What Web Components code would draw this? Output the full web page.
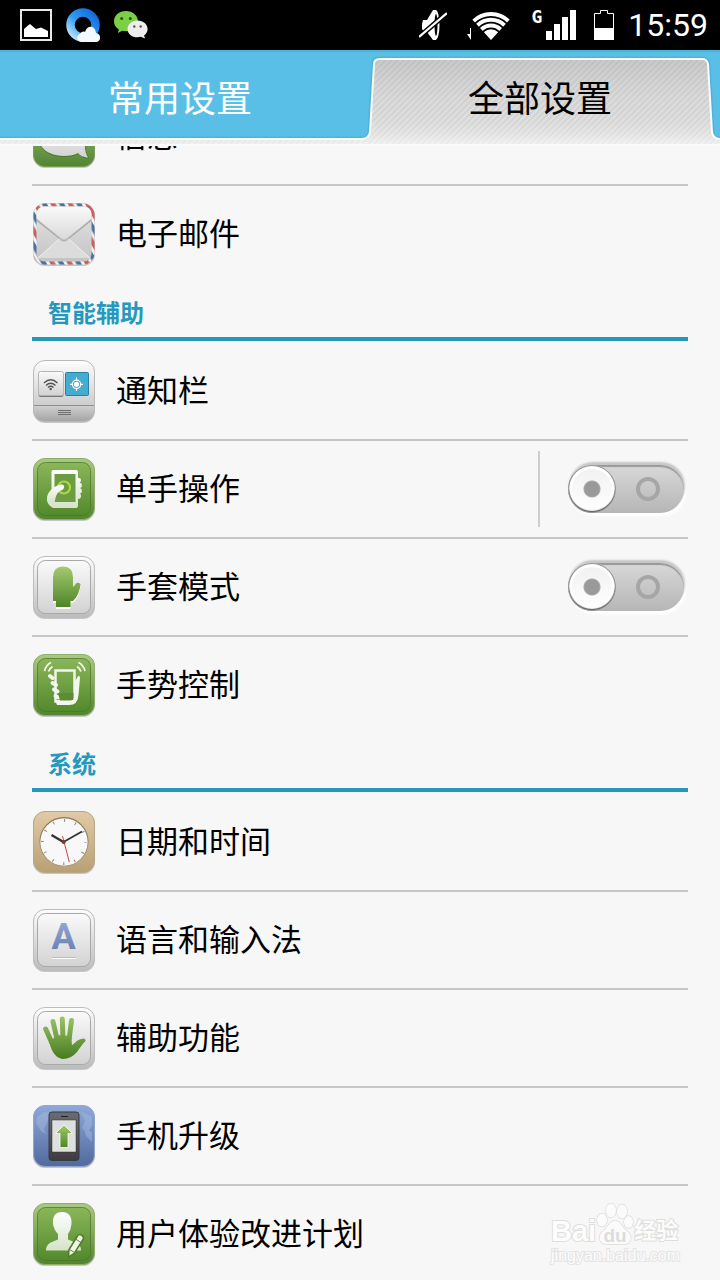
<!DOCTYPE html>
<html lang="zh-CN">
<head>
<meta charset="utf-8">
<meta name="viewport" content="width=device-width, initial-scale=1">
<title>全部设置</title>
<style>
  body {
    margin: 0;
    background: #f7f7f7;
    font-family: Roboto, "Noto Sans CJK SC", sans-serif;
    color: #000;
  }
</style>
</head>
<body>
<settings-app>
  <status-bar slot="status" time="15:59"></status-bar>
  <settings-tabs slot="tabs">
    <span slot="common">常用设置</span>
    <span slot="all">全部设置</span>
  </settings-tabs>

  <settings-row icon="message">信息</settings-row>
  <settings-row icon="mail" last>电子邮件</settings-row>

  <section-title>智能辅助</section-title>
  <settings-row icon="panel">通知栏</settings-row>
  <settings-row icon="onehand">单手操作<toggle-switch slot="end" label="单手操作" divided></toggle-switch></settings-row>
  <settings-row icon="glove">手套模式<toggle-switch slot="end" label="手套模式"></toggle-switch></settings-row>
  <settings-row icon="gesture" last>手势控制</settings-row>

  <section-title>系统</section-title>
  <settings-row icon="clock">日期和时间</settings-row>
  <settings-row icon="language">语言和输入法</settings-row>
  <settings-row icon="hand">辅助功能</settings-row>
  <settings-row icon="upgrade">手机升级</settings-row>
  <settings-row icon="user" last>用户体验改进计划</settings-row>

  <page-watermark slot="overlay"></page-watermark>
</settings-app>

<script>
// Status bar
const statusTemplate = document.createElement("template");
statusTemplate.innerHTML = `
<style>
:host {
  display: flex;
  justify-content: space-between;
  align-items: center;
  height: 50px;
  padding: 0 12px 0 20px;
  background: #000;
  color: #fff;
}
.group {
  display: flex;
  align-items: center;
  gap: 14px;
}
.radio {
  display: flex;
  align-items: center;
  gap: 20px;
  padding-right: 4px;
}
.network {
  display: flex;
  align-items: flex-start;
  gap: 4px;
}
.network span {
  font: bold 18px/14px "DejaVu Sans Mono", monospace;
}
.time {
  font-size: 32px;
  line-height: 50px;
}
svg { display: block; }
</style>
<div class="group">
  <svg width="32" height="32" viewBox="0 0 32 32">
    <rect x="1" y="1" width="30" height="30" fill="none" stroke="#e9e9e9" stroke-width="2"/>
    <path d="M4 28V20L8 16.500 10 15 14 18.500 16 20 21 18.500 28 22V28Z" fill="#fff"/>
  </svg>
  <svg width="34" height="34" viewBox="0 0 34 34">
    <defs>
      <linearGradient id="ring" x1="0" y1="1" x2="1" y2="0">
        <stop offset="0" stop-color="#c4e8ff"/><stop offset=".45" stop-color="#2f9cf0"/><stop offset="1" stop-color="#1167dc"/>
      </linearGradient>
    </defs>
    <circle cx="17" cy="17" r="12.500" fill="none" stroke="url(#ring)" stroke-width="8.500"/>
    <path d="M15 34C10 33 10 27 14 26 15 24 17 23 19 24 21 17 29 17 30 25 36 26 35 34 30 34Z" fill="#f4f9ff"/>
  </svg>
  <svg width="34" height="28" viewBox="0 0 34 28">
    <path d="M12 0C5 0 0 4.500 0 10.300c0 3.400 1.800 6.300 4.800 8.200L4 22l4.200-2.200c1.200.3 2.500.5 3.800.5 6.600 0 12-4.500 12-10S18.600 0 12 0Z" fill="#7bd044"/>
    <circle cx="7.700" cy="7.500" r="1.500" fill="#24570c"/><circle cx="16.300" cy="7.500" r="1.500" fill="#24570c"/>
    <path d="M23.500 9.500c-5.700 0-10 3.800-10 8.400s4.300 8.300 10 8.300c1.200 0 2.300-.2 3.300-.5L31 27.500l-.9-3.200c2.200-1.500 3.500-3.800 3.500-6.400 0-4.600-4.300-8.400-10.100-8.400Z" fill="#eee"/>
    <circle cx="20.300" cy="15.500" r="1.200" fill="#555"/><circle cx="26.700" cy="15.500" r="1.200" fill="#555"/>
  </svg>
</div>
<div class="group">
  <div class="radio">
    <svg width="28" height="30" viewBox="0 0 28 30">
      <path d="M4 10H8L14 0H17V30H14L8 22H5L3 19V14Z" fill="#fff"/>
      <ellipse cx="16.500" cy="15" rx="4" ry="15" fill="#fff"/>
      <ellipse cx="17" cy="15" rx="1.500" ry="11" fill="#000"/>
      <path d="M0 27L28 3" stroke="#000" stroke-width="5"/>
      <path d="M0 27L28 3" stroke="#fff" stroke-width="2.300"/>
    </svg>
    <svg width="44" height="30" viewBox="0 0 44 30">
      <defs><clipPath id="fan"><path d="M24 30L3 7V0H45V7Z"/></clipPath></defs>
      <g clip-path="url(#fan)" fill="none" stroke="#fff" stroke-width="4">
        <circle cx="24" cy="29" r="25"/>
        <circle cx="24" cy="29" r="19.300"/>
        <circle cx="24" cy="29" r="13.600"/>
        <circle cx="24" cy="29" r="9.800" fill="#fff" stroke="none"/>
      </g>
      <path d="M4 18V30L0 24H3V18Z" fill="#fff"/>
    </svg>
    <div class="network">
      <span>G</span>
      <svg width="30" height="30" viewBox="0 0 30 30" fill="#fff">
        <path d="M0 21H6V30H0ZM8 14H14V30H8ZM16 7H22V30H16ZM24 0H30V30H24Z"/>
      </svg>
    </div>
  </div>
  <svg width="20" height="30" viewBox="0 0 20 30">
    <path d="M.5 29.500V3.500H6.500V.5H13.500V3.500H19.500V29.500Z" fill="none" stroke="#fff"/>
    <path d="M0 18H20V30H0Z" fill="#fff"/>
  </svg>
  <span class="time"></span>
</div>
`;

class StatusBar extends HTMLElement {
  constructor() {
    super();
    this.attachShadow({ mode: "open" });
    this.shadowRoot.appendChild(statusTemplate.content.cloneNode(true));
  }

  connectedCallback() {
    this.shadowRoot.querySelector(".time").textContent = this.getAttribute("time");
  }
}

// Tabs: the selected one is a raised, brushed trapezoid
const tabsTemplate = document.createElement("template");
tabsTemplate.innerHTML = `
<style>
:host {
  display: block;
  position: relative;
  background: #5abfe6;
}
.shape {
  position: absolute;
  width: 100%;
  height: 100%;
}
.tabs {
  position: relative;
  display: flex;
}
button {
  flex: 1;
  height: 96px;
  padding: 0 0 4px;
  border: 0;
  background: none;
  font: inherit;
  font-size: 36px;
  color: #fff;
}
button[aria-selected="true"] { color: #000; }
</style>
<svg class="shape" viewBox="0 0 720 96" preserveAspectRatio="none">
  <defs>
    <pattern id="brush" width="6" height="6" patternUnits="userSpaceOnUse">
      <rect width="6" height="6" fill="#e2e2e2"/>
      <path d="M-1 1L1 -1M-1 7L7 -1M5 7L7 5" stroke="#d3d3d3" stroke-width="2"/>
    </pattern>
    <linearGradient id="shade" x1="0" y1="0" x2="0" y2="1">
      <stop offset="0" stop-color="#999" stop-opacity=".35"/>
      <stop offset=".6" stop-color="#ccc" stop-opacity=".15"/>
      <stop offset="1" stop-color="#fff" stop-opacity=".6"/>
    </linearGradient>
    <linearGradient id="top" x1="0" y1="0" x2="0" y2="1">
      <stop offset="0" stop-color="#3f9cc2" stop-opacity=".5"/><stop offset="1" stop-color="#3f9cc2" stop-opacity="0"/>
    </linearGradient>
  </defs>
  <rect width="720" height="3" fill="url(#top)"/>
  <path d="M-4 89H362Q369 89 370 82L374 14Q374 9 380 9H702Q707 9 708 14L712 82Q713 89 720 89H724V94H-4Z" fill="none" stroke="#3f9cc2" stroke-opacity=".35" stroke-width="5"/>
  <path d="M-4 89H362Q369 89 370 82L374 14Q374 9 380 9H702Q707 9 708 14L712 82Q713 89 720 89H724V95H-4Z" fill="url(#brush)"/>
  <path d="M-4 89H362Q369 89 370 82L374 14Q374 9 380 9H702Q707 9 708 14L712 82Q713 89 720 89H724V95H-4Z" fill="url(#shade)" stroke="#f8fcfd" stroke-width="2"/>
</svg>
<div class="tabs" role="tablist">
  <button role="tab" aria-selected="false"><slot name="common"></slot></button>
  <button role="tab" aria-selected="true"><slot name="all"></slot></button>
</div>
`;

class SettingsTabs extends HTMLElement {
  constructor() {
    super();
    this.attachShadow({ mode: "open" });
    this.shadowRoot.appendChild(tabsTemplate.content.cloneNode(true));
  }
}

// App icons, 64x64
const tile = (fill, edge) =>
  `<rect x="1" y="2" width="62" height="62" rx="12" fill="#000" opacity=".2"/>
   <rect x="1.500" y="1.500" width="61" height="61" rx="11.500" fill="url(#${fill})" stroke="${edge}"/>`;

const greenTile = tile("green", "#8fae6a") +
  `<rect x="5.500" y="5.500" width="53" height="53" rx="8" fill="url(#greenIn)" stroke="#477524" stroke-opacity=".7"/>`;

const greyTile = tile("grey", "#bdbdbd") +
  `<rect x="5.500" y="5.500" width="53" height="53" rx="8" fill="url(#greyIn)" stroke="#a8a8a8"/>`;

const icons = {
  message: tile("green", "#7a9c56") +
    `<path d="M32 14C18 14 7 23 7 35 7 46 18 53 32 53 38 53 43 52 46 50 49 53 54 55 57 54.500 55 51 54 48 54 44 62 27 47 14 32 14Z" fill="#2d5b12" opacity=".5"/>
     <path d="M32 13C18 13 7 22 7 34 7 45 18 52 32 52 38 52 43 51 46 49 48 52 53 53.500 56 53.500 54 50 53 47 53 43 61 26 47 13 32 13Z" fill="url(#greyIn)"/>`,

  mail: tile("grey", "#c4c4c4") +
    `<rect x="1.500" y="1.500" width="61" height="61" rx="11.500" fill="url(#airmail)"/>
     <rect x="4.500" y="4.500" width="55" height="55" rx="8" fill="url(#mailBack)"/>
     <path d="M6 56L27 37H37L58 56" fill="#dcdcdc" stroke="#eee"/>
     <path d="M4.500 19L29 38.500Q32 40.500 35 38.500L59.500 19V12Q59 4.500 51 4.500H13Q5 4.500 4.500 12Z" fill="#888" opacity=".5"/>
     <path d="M4.500 16.500L29 36.500Q32 38.500 35 36.500L59.500 16.500V12Q59 4.500 51 4.500H13Q5 4.500 4.500 12Z" fill="url(#flap)"/>`,

  panel: tile("grey", "#b9b9b9") +
    `<path d="M2 46H62V51Q62 62 51 62H13Q2 62 2 51Z" fill="url(#dock)"/>
     <path d="M2 46.500H62" stroke="#8f8f8f"/>
     <path d="M26 51.500H39M26 53.500H39M26 55.500H39" stroke="#6f6f6f"/>
     <rect x="6.500" y="14" width="25" height="24" rx="2" fill="#777"/>
     <rect x="6.500" y="12.500" width="25" height="24" rx="2" fill="url(#greyIn)" stroke="#b5b5b5"/>
     <rect x="33.500" y="13.500" width="23" height="23" rx="1" fill="#43acd0" stroke="#2482a6"/>
     <g fill="none" stroke="#555" stroke-width="1.400">
       <path d="M12 24Q18.700 17.500 25.500 24M14 26.500Q18.700 22 23.500 26.500M16 28.500Q18.700 26 21.500 28.500"/>
     </g>
     <circle cx="18.700" cy="30" r="1.200" fill="#555"/>
     <circle cx="44.500" cy="25.300" r="4.200" fill="none" stroke="#fff" stroke-width="1.200"/>
     <circle cx="44.500" cy="25.300" r="2.600" fill="#fff"/>
     <path d="M44.500 18.500V22M44.500 28.700V32M38 25.300H41M48 25.300H51" stroke="#fff" stroke-width="1.200"/>`,

  onehand: greenTile +
    `<path d="M21 13H44Q46 13 46 15V21H47Q49 21 49 23 49 25 47.500 25.500 50 26 50 28.500 50 30.500 48 31 50 32 50 34 50 36 48 36.500 49.500 37.500 49 40 48.500 42 46 42V49Q46 51 44 51H21Q15 48 15 42 15 36 19.500 33V15Q19.500 13 21 13Z" fill="url(#paper)"/>
     <rect x="22.500" y="17" width="21" height="28" fill="#6d9c42"/>
     <circle cx="32" cy="30.500" r="6" fill="none" stroke="#a9db46" stroke-width="2.200"/>
     <path d="M15 44C15 34 22 29 29 27.500 33.500 27 33 32.500 29 33.500 25 35.500 24 38 22.500 46Z" fill="url(#paper)"/>`,

  glove: greyTile +
    `<path d="M24 53V47H21V22Q21 12 31 12 41 12 41 22V33Q43 31 44 29.500 46 28 48.500 30 47.500 41 41 47H38.500V53Z" fill="#fff" transform="translate(0 1)"/>
     <path d="M24 52V46H21V22Q21 11.500 31 11.500 41 11.500 41 22V32Q43 30 44 28.500 46 27 48.500 29 47.500 40 41 46H38.500V52Z" fill="url(#leaf)"/>`,

  gesture: greenTile +
    `<g fill="none" stroke="#f2f6ec">
       <rect x="23.500" y="17.500" width="19" height="31" stroke-width="2.500"/>
       <path d="M12.500 18Q14 12 19 9.500M16.500 18.500Q17.500 15.500 20.500 13.500M53 18Q51.500 12 46.500 9.500M49 18.500Q48 15.500 45 13.500" stroke-width="1.800"/>
       <path d="M18 23L20.500 25M20.500 30L24 32M22 36.500L25.500 38.500M23.500 43L26.500 44.500" stroke-width="4" stroke-linecap="round"/>
     </g>
     <path d="M42 30L45.500 24Q47.500 21 48 25L46.500 42Q46 52 37 52H25L23 47H42Z" fill="#f2f6ec"/>
     <path d="M26 40H41.500V45Q41 47.500 38 47.500H28Z" fill="#5c8d33"/>`,

  clock: tile("tan", "#b9a688") +
    `<circle cx="32" cy="31.500" r="24.500" fill="#8c7757"/>
     <circle cx="32" cy="32" r="23.700" fill="#f8f8f8"/>
     <circle cx="32" cy="32" r="21.500" fill="none" stroke="#888" stroke-width="3" stroke-dasharray="1 10.257" stroke-dashoffset=".5"/>
     <path d="M31.500 32L19.500 25" stroke="#333" stroke-width="2.400"/>
     <path d="M31.500 32L50 21.500" stroke="#333" stroke-width="1.800"/>
     <path d="M30.500 26L37.300 52" stroke="#c04a45"/>
     <circle cx="31.700" cy="32" r="2" fill="#7a3b36"/>`,

  language: greyTile +
    `<text x="31.500" y="41" text-anchor="middle" font-family="Roboto, sans-serif" font-weight="700" font-size="36" fill="url(#letter)">A</text>
     <path d="M20 49.500H44" stroke="#bbb"/><path d="M20 50.500H44" stroke="#fff"/>`,

  hand: greyTile +
    `<g fill="none" stroke="url(#leafAbs)" stroke-width="5" stroke-linecap="round">
       <path d="M13.700 23L19.500 36M21 15.500L25 33M30.300 13L31 33M39.500 14.500L37 34"/>
       <path d="M51.500 34.500Q46 35 41 42" stroke-width="4"/>
     </g>
     <path d="M17.200 36L25 29 39 30 40 39Q45 36 53.500 34.500 49 40 45 46 39 53 31 53 21 52 17.200 36Z" fill="url(#leafAbs)"/>`,

  upgrade: tile("blue", "#93a6cd") +
    `<path d="M5 13L13 8 19 10 15 18 12 25 14 30 9 27 4 19ZM49 8L60 12V22L55 29 50 24 53 17ZM52 24L60 28V38L54 32Z" fill="#a9bce2" opacity=".45"/>
     <rect x="17" y="8" width="30" height="48.500" rx="3" fill="url(#slate)" stroke="#3a3a40"/>
     <path d="M29 12.500H36" stroke="#222"/>
     <rect x="20" y="16" width="24" height="32" fill="#dedfdf" stroke="#333" stroke-width=".5"/>
     <path d="M32 21L40.500 29.500H36V43.500H28V29.500H23.500Z" fill="url(#leaf)" stroke="#f8fff0" stroke-width=".8"/>`,

  user: greenTile +
    `<path d="M14 48.500Q14 42 20 40L26 37.500V32Q22 28 21 22 20 10 30 10 40 10 39.500 22 39 28 36 32V37.500L42 40Q49 42 49 48.500Z" fill="url(#paper)"/>
     <path d="M45.500 34Q47 31.500 50 33.500 52.500 35 51 37.500L42.500 51 36.500 55 37 47.500Z" fill="#f0f3ea" stroke="#4d7d27" stroke-width="1.500"/>
     <path d="M43.500 37L49 40.500M37.500 47.500L42.500 50.500" stroke="#5c8d33"/>`
};

// [id, first colour, last colour]
const ramps = [
  ["green", "#abc983", "#528430"],
  ["greenIn", "#8bb65a", "#528a2b"],
  ["grey", "#fdfdfd", "#bcbcbc"],
  ["greyIn", "#fafafa", "#d2d2d2"],
  ["mailBack", "#e4e4e4", "#c4c4c4"],
  ["flap", "#fafafa", "#d9d9d9"],
  ["dock", "#d2d2d2", "#a4a4a4"],
  ["paper", "#ffffff", "#d6e2c8"],
  ["leaf", "#a3ca70", "#4f8526"],
  ["tan", "#e0cba6", "#b99f74"],
  ["letter", "#9db0d8", "#5f76ad"],
  ["blue", "#8ea8d8", "#506a9f"],
  ["slate", "#6b6c73", "#3e3b40"]
];

const defs = `<defs>
  ${ramps.map(([id, from, to]) => `
  <linearGradient id="${id}" x1="0" y1="0" x2="0" y2="1">
    <stop offset="0" stop-color="${from}"/><stop offset="1" stop-color="${to}"/>
  </linearGradient>`).join("")}
  <linearGradient id="leafAbs" gradientUnits="userSpaceOnUse" x1="0" y1="10" x2="0" y2="54">
    <stop offset="0" stop-color="#9dc566"/><stop offset="1" stop-color="#447a1e"/>
  </linearGradient>
  <pattern id="airmail" width="15" height="15" patternUnits="userSpaceOnUse" patternTransform="rotate(-30)">
    <rect width="15" height="15" fill="#f1f1f1"/>
    <rect width="4.500" height="15" fill="#c9605f"/>
    <rect x="7.500" width="4.500" height="15" fill="#4a719f"/>
  </pattern>
</defs>`;

class AppIcon extends HTMLElement {
  connectedCallback() {
    if (this.shadowRoot) return;
    this.attachShadow({ mode: "open" }).innerHTML = `
      <style>
        :host { display: block; flex: none; width: 64px; height: 64px; }
        svg { display: block; }
      </style>
      <svg width="64" height="64" viewBox="0 0 64 64" aria-hidden="true">${defs}${icons[this.getAttribute("name")]}</svg>`;
  }
}

// One line of the list
const rowTemplate = document.createElement("template");
rowTemplate.innerHTML = `
<style>
:host {
  display: flex;
  align-items: center;
  margin: 0 32px;
  border-bottom: 2px solid #c6c6c6;
}
:host([last]) { border-bottom: 0; }
button {
  flex: 1;
  display: flex;
  align-items: center;
  gap: 20px;
  height: 96px;
  padding: 0;
  border: 0;
  background: none;
  font: inherit;
  font-size: 31px;
  color: inherit;
  text-align: left;
}
span { padding-bottom: 6px; }
</style>
<button><app-icon></app-icon><span><slot></slot></span></button>
<slot name="end"></slot>
`;

class SettingsRow extends HTMLElement {
  constructor() {
    super();
    this.attachShadow({ mode: "open" });
    const content = rowTemplate.content.cloneNode(true);
    content.querySelector("app-icon").setAttribute("name", this.getAttribute("icon"));
    this.shadowRoot.appendChild(content);
  }
}

const switchTemplate = document.createElement("template");
switchTemplate.innerHTML = `
<style>
:host {
  display: flex;
  align-items: center;
  height: 76px;
  padding: 0 4px 0 28px;
}
:host([divided]) { border-left: 2px solid #cecece; }
input {
  appearance: none;
  display: flex;
  align-items: center;
  justify-content: space-between;
  width: 116px;
  height: 48px;
  margin: 0;
  padding-right: 24px;
  box-sizing: border-box;
  border-radius: 24px;
  background: linear-gradient(#d8d8d8, #b6b6b6);
  box-shadow: inset 0 2px 1px #999, 1px -3px 2px #c6c6c6, 2px 3px 3px #fff;
}
input::before {
  content: "";
  width: 48px;
  height: 48px;
  border-radius: 50%;
  background: radial-gradient(circle, #999 0 7px, #ababab 8px, transparent 9px), linear-gradient(#f0f0f0, #fff);
  box-shadow: inset 0 0 0 1px #999, inset 0 -1px 1px 1px #555, inset 0 0 1px 4px #fff;
}
input::after {
  content: "";
  width: 16px;
  height: 16px;
  border: 4px solid #a6a6a6;
  border-radius: 50%;
}
input:checked { flex-direction: row-reverse; padding: 0 0 0 24px; }
</style>
<input type="checkbox" role="switch">
`;

class ToggleSwitch extends HTMLElement {
  constructor() {
    super();
    this.attachShadow({ mode: "open" });
    this.shadowRoot.appendChild(switchTemplate.content.cloneNode(true));
  }

  connectedCallback() {
    this.shadowRoot.querySelector("input").setAttribute("aria-label", this.getAttribute("label"));
  }
}

class SectionTitle extends HTMLElement {
  constructor() {
    super();
    this.attachShadow({ mode: "open" });
    this.shadowRoot.innerHTML = `
      <style>
        :host { display: block; margin: 0 32px 2px; border-bottom: 4px solid #2798bc; }
        h2 { margin: 0; padding: 14px 16px 5px; font-size: 24px; line-height: 36px; color: #2499bf; }
      </style>
      <h2><slot></slot></h2>`;
  }
}

class PageWatermark extends HTMLElement {
  constructor() {
    super();
    this.attachShadow({ mode: "open" });
    this.shadowRoot.innerHTML = `
      <style>
        :host {
          display: block;
          position: absolute;
          right: 40px;
          bottom: 14px;
          pointer-events: none;
          font-family: "Liberation Sans", "Noto Sans CJK SC", sans-serif;
          color: #fcfcfc;
          -webkit-text-stroke: 2px #dedede;
          paint-order: stroke fill;
        }
        .brand { display: flex; align-items: flex-end; font-weight: 700; font-size: 29px; line-height: 30px; }
        .brand .cn { font-size: 22px; }
        .url { font-size: 16px; line-height: 20px; -webkit-text-stroke: 2px #e4e4e4; }
        svg text { -webkit-text-stroke: 0; }
      </style>
      <div class="brand">
        <span>Bai</span>
        <svg width="38" height="44" viewBox="0 0 38 44">
          <g fill="#fbfbfb" stroke="#dcdcdc" stroke-width="1.400">
            <ellipse cx="6" cy="18" rx="5" ry="6.500"/><ellipse cx="15" cy="8.500" rx="5" ry="7"/>
            <ellipse cx="26" cy="9.500" rx="5" ry="7"/><ellipse cx="32.500" cy="20" rx="4.500" ry="6"/>
            <path d="M19 19C13 19 12 26 7 29 1 34 3 43 12 42H27C36 43 37 34 31 29 26 26 25 19 19 19Z"/>
          </g>
          <text x="19" y="40" text-anchor="middle" font-size="19" fill="#dcdcdc">du</text>
        </svg>
        <span class="cn">经验</span>
      </div>
      <div class="url">jingyan.baidu.com</div>`;
  }
}

// Page frame: fixed bars above a scrolling list
class SettingsApp extends HTMLElement {
  constructor() {
    super();
    this.attachShadow({ mode: "open" });
    this.shadowRoot.innerHTML = `
      <style>
        :host { display: flex; flex-direction: column; position: relative; height: 100vh; overflow: hidden; }
        main { flex: 1; min-height: 0; overflow-y: auto; scrollbar-width: none; }
      </style>
      <slot name="status"></slot>
      <slot name="tabs"></slot>
      <main><slot></slot></main>
      <slot name="overlay"></slot>`;
  }

  connectedCallback() {
    // the first row is half scrolled under the tabs
    this.shadowRoot.querySelector("main").scrollTop = 58;
  }
}

customElements.define("app-icon", AppIcon);
customElements.define("status-bar", StatusBar);
customElements.define("settings-tabs", SettingsTabs);
customElements.define("toggle-switch", ToggleSwitch);
customElements.define("settings-row", SettingsRow);
customElements.define("section-title", SectionTitle);
customElements.define("page-watermark", PageWatermark);
customElements.define("settings-app", SettingsApp);
</script>
</body>
</html>
